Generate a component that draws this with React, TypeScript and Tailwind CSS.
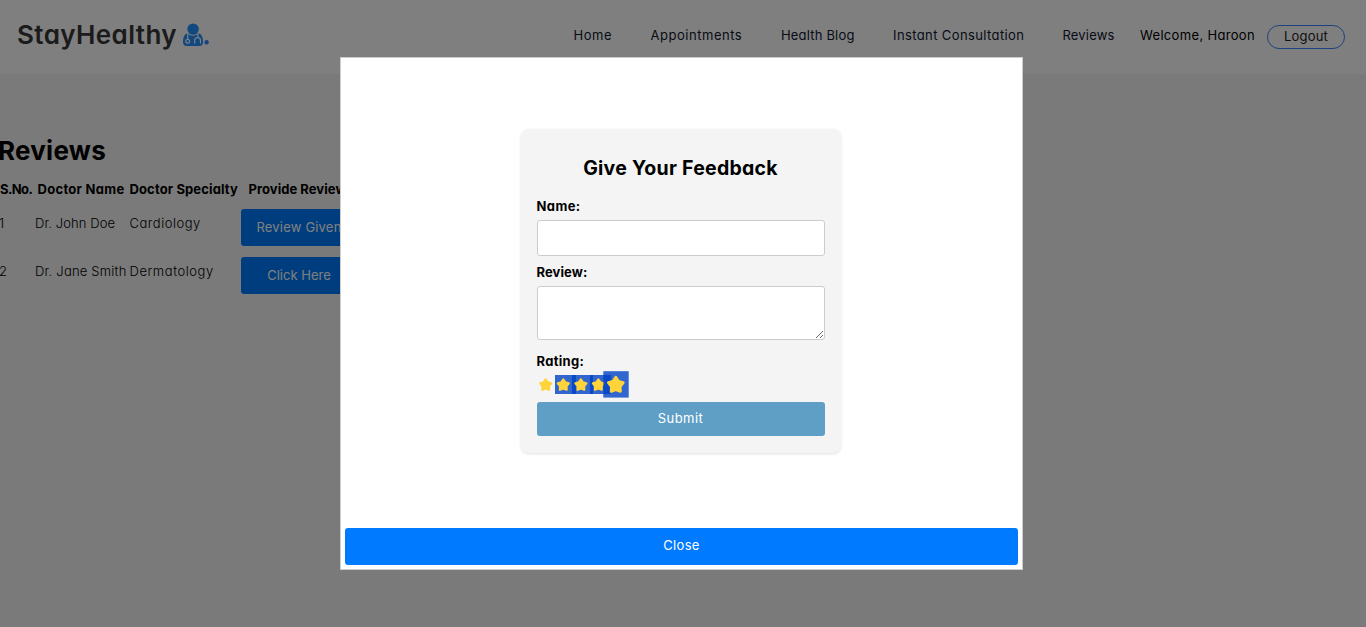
const navItems = [
  { label: "Home", box: "w-[77px] tracking-[0.58px]" },
  { label: "Appointments", box: "w-[130.5px] tracking-[0.53px]" },
  { label: "Health Blog", box: "w-[112px] tracking-[0.18px]" },
  { label: "Instant Consultation", box: "w-[169.5px] tracking-[0.39px]" },
  { label: "Reviews", box: "w-[77.5px] tracking-[0.17px]" },
];

const doctors = [
  {
    id: 1,
    name: "Dr. John Doe",
    nameStyle: "tracking-[0.08px]",
    specialty: "Cardiology",
    specialtyStyle: "tracking-[0.52px]",
    action: "Review Given",
    actionStyle: "tracking-[0.19px]",
  },
  {
    id: 2,
    name: "Dr. Jane Smith",
    nameStyle: "tracking-[0.2px]",
    specialty: "Dermatology",
    specialtyStyle: "tracking-[0.56px]",
    action: "Click Here",
    actionStyle: "tracking-[0.02px]",
  },
];

const stars = [
  { cx: 8.7, r: 7, box: null },
  { cx: 26.3, r: 7, box: { x: 18, y: 4, w: 21, h: 19 } },
  { cx: 43.9, r: 7, box: { x: 35, y: 4, w: 21, h: 19 } },
  { cx: 61.4, r: 7, box: { x: 53, y: 4, w: 21, h: 19 } },
  { cx: 78.8, r: 9.4, box: { x: 66.3, y: 0.2, w: 25.4, h: 26.4 } },
];

function starPath(cx: number, cy: number, r: number) {
  const points: string[] = [];
  for (let i = 0; i < 10; i++) {
    const radius = i % 2 === 0 ? r * 0.83 : r * 0.49;
    const angle = (Math.PI / 5) * i - Math.PI / 2;
    points.push(`${cx + radius * Math.cos(angle)},${cy + radius * Math.sin(angle)}`);
  }
  return `M${points.join("L")}Z`;
}

function Rating() {
  return (
    <svg className="block h-[27px] w-[96px] shrink-0" viewBox="0 0 96 27">
      {stars.map((s) => (
        <g key={s.cx}>
          {s.box && (
            <rect x={s.box.x} y={s.box.y} width={s.box.w} height={s.box.h} fill="rgb(0,66,198)" fillOpacity="0.8" />
          )}
          <path
            d={starPath(s.cx, 14.1, s.r)}
            fill="#ffd43b"
            stroke="#ffd43b"
            strokeWidth={s.r * 0.3}
            strokeLinejoin="round"
          />
        </g>
      ))}
    </svg>
  );
}

function DoctorIcon() {
  return (
    <svg className="h-[23px] w-[26px] shrink-0" viewBox="0 0 26 23">
      <circle cx="10.1" cy="6.1" r="5.7" fill="#2190ff" />
      <path
        d="M4.6 10.2C1.4 10.9 0 14.2 0 19.2C0 21.6 1.5 22.9 3.7 22.9H16.4C18.6 22.9 20.1 21.6 20.1 19.2C20.1 14.2 18.7 10.9 15.5 10.2C14.1 11.9 12.2 12.7 10.05 12.7C7.9 12.7 6 11.9 4.6 10.2Z"
        fill="#2190ff"
      />
      <g fill="none" stroke="#fff" strokeWidth="1.2">
        <path d="M4.7 10.5V16.5M15 10.5V14.5M11.7 20.5V17.6C11.7 15.7 12.9 14.7 14.6 14.7C16.4 14.7 17.5 15.7 17.5 17.6V20.5" />
        <circle cx="4.7" cy="18.3" r="1.9" />
      </g>
      <circle cx="23.6" cy="19.2" r="2.2" fill="#3685fb" />
    </svg>
  );
}

function Header() {
  return (
    <header className="flex h-[74px] items-start bg-white">
      <div className="flex w-[573.5px] items-start pl-[17px] pt-[17px] text-[#363636]">
        <span className="w-[166px] whitespace-nowrap text-[26px] font-semibold leading-9 tracking-[0.4px]">
          StayHealthy
        </span>
        <div className="pt-[6px]">
          <DoctorIcon />
        </div>
      </div>
      <nav className="flex pt-[25px] text-[13px] leading-5 text-[#0f172f]">
        {navItems.map((item) => (
          <a key={item.label} className={`shrink-0 whitespace-nowrap ${item.box}`}>
            {item.label}
          </a>
        ))}
      </nav>
      <span className="w-[127px] whitespace-nowrap pt-[25px] text-[13px] leading-5 tracking-[0.33px] text-black">
        Welcome, Haroon
      </span>
      <button className="mt-[25px] h-6 w-[78px] rounded-full border border-[#3685fb] pb-px text-[13px] leading-[21px] tracking-[0.19px] text-[#222]">
        Logout
      </button>
    </header>
  );
}

function ReviewsTable() {
  return (
    <main className="pt-[57px] text-black">
      <h1 className="-ml-[2px] text-[26px] font-bold leading-10 tracking-[0.25px]">Reviews</h1>
      <div className="mt-[8px] flex whitespace-nowrap text-[13px] font-bold leading-5">
        <span className="w-[37.5px] tracking-[-0.55px]">S.No.</span>
        <span className="w-[92px] tracking-[0.3px]">Doctor Name</span>
        <span className="w-[119px] tracking-[0.13px]">Doctor Specialty</span>
        <span className="tracking-[0.05px]">Provide Review</span>
      </div>
      <div className="mt-[10px] flex flex-col gap-[11px]">
        {doctors.map((d) => (
          <div key={d.id} className="flex h-[37px] whitespace-nowrap text-[13px] font-light leading-[29px]">
            <span className="w-[35px]">
              <span className="-ml-px">{d.id}</span>
            </span>
            <span className={`w-[94.5px] ${d.nameStyle}`}>{d.name}</span>
            <span className={`w-[111.5px] ${d.specialtyStyle}`}>{d.specialty}</span>
            <button
              className={`h-[37px] w-[116px] rounded-[3px] bg-[#007bff] text-[13px] font-normal leading-[37px] text-white ${d.actionStyle}`}
            >
              {d.action}
            </button>
          </div>
        ))}
      </div>
    </main>
  );
}

function FeedbackForm() {
  return (
    <form className="flex h-[324px] w-80 flex-col rounded-lg bg-[#f4f4f4] px-4 pt-6 text-[13px] shadow-[0_1px_3px_rgba(0,0,0,0.12)]">
      <h2 className="text-center text-[19.5px] font-bold leading-[30px] tracking-[0.26px]">Give Your Feedback</h2>
      <label className="mt-[13px] font-bold leading-5 tracking-[0.4px]">Name:</label>
      <input className="mt-1 h-9 w-full rounded-[3px] border border-[#ccc] bg-white" />
      <label className="mt-[6px] font-bold leading-5 tracking-[0.1px]">Review:</label>
      <textarea className="mt-1 h-[54px] w-full resize rounded-[3px] border border-[#ccc] bg-white" />
      <label className="mt-[11px] font-bold leading-5 tracking-[0.3px]">Rating:</label>
      <Rating />
      <button className="mt-[4px] h-[34px] shrink-0 rounded-[3px] bg-[#5f9fc6] pb-px leading-[33px] tracking-[0.45px] text-white">
        Submit
      </button>
    </form>
  );
}

export default function App() {
  return (
    <div className="relative h-[627px] w-full overflow-hidden bg-[#f4f4f4] font-['Inter',sans-serif] [font-feature-settings:'cv11']">
      <Header />
      <ReviewsTable />
      <div className="absolute inset-0 bg-black/50 pl-[340px] pt-[57px]">
        <div className="flex h-[513px] w-[683px] flex-col border border-[#ccc] bg-white px-1 pt-[71px] text-black">
          <div className="pl-[175.5px]">
            <FeedbackForm />
          </div>
          <button className="mt-[75px] h-[37px] shrink-0 rounded-[3px] bg-[#007bff] pb-[3px] text-[13px] leading-[34px] tracking-[0.35px] text-white">
            Close
          </button>
        </div>
      </div>
    </div>
  );
}
